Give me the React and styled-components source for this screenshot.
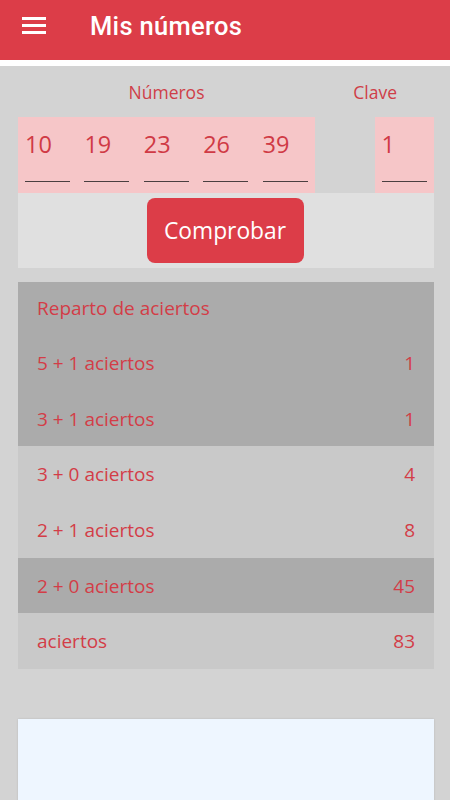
import React from "react";
import styled, { createGlobalStyle } from "styled-components";

const GlobalStyle = createGlobalStyle`
  html, body {
    margin: 0;
    padding: 0;
    background: #d3d3d3;
  }
  body {
    font-family: "Open Sans", "Noto Sans", sans-serif;
  }
`;

const numbers = ["10", "19", "23", "26", "39"];
const clave = "1";

const rows = [
  { label: "5 + 1 aciertos", value: "1", dark: true },
  { label: "3 + 1 aciertos", value: "1", dark: true },
  { label: "3 + 0 aciertos", value: "4", dark: false },
  { label: "2 + 1 aciertos", value: "8", dark: false },
  { label: "2 + 0 aciertos", value: "45", dark: true },
  { label: "aciertos", value: "83", dark: false },
];

export default function App() {
  return (
    <Page>
      <GlobalStyle />
      <TopBar>
        <MenuButton aria-label="menu">
          <span />
          <span />
          <span />
        </MenuButton>
        <Title>Mis números</Title>
      </TopBar>
      <Divider />
      <Content>
        <Labels>
          <NumbersLabel>Números</NumbersLabel>
          <ClaveLabel>Clave</ClaveLabel>
        </Labels>
        <InputRow>
          <InputGroup>
            {numbers.map((n) => (
              <Cell key={n}>
                <CellValue>{n}</CellValue>
                <Underline />
              </Cell>
            ))}
          </InputGroup>
          <InputGroup>
            <Cell>
              <CellValue>{clave}</CellValue>
              <Underline />
            </Cell>
          </InputGroup>
        </InputRow>
        <ButtonPanel>
          <CheckButton>Comprobar</CheckButton>
        </ButtonPanel>

        <Results>
          <ResultRow $dark>
            <span>Reparto de aciertos</span>
          </ResultRow>
          {rows.map((r) => (
            <ResultRow key={r.label} $dark={r.dark}>
              <span>{r.label}</span>
              <span>{r.value}</span>
            </ResultRow>
          ))}
        </Results>

        <AdBox />
      </Content>
    </Page>
  );
}

const Page = styled.div`
  width: 450px;
  height: 800px;
  overflow: hidden;
  background: #d3d3d3;
`;

const TopBar = styled.header`
  display: flex;
  align-items: center;
  height: 60px;
  background: #dc3d48;
  padding-left: 22px;
  box-sizing: border-box;
`;

const MenuButton = styled.div`
  display: flex;
  flex-direction: column;
  gap: 4.5px;
  width: 24px;
  margin-top: -9px;
  span {
    display: block;
    height: 2.5px;
    background: #fff;
  }
`;

const Title = styled.h1`
  margin: 0 0 0 44px;
  margin-top: -8px;
  font-family: Roboto, "Noto Sans", sans-serif;
  font-weight: 500;
  font-size: 25.5px;
  color: #fff;
  letter-spacing: 0.3px;
`;

const Divider = styled.div`
  height: 6px;
  background: #fff;
`;

const Content = styled.main`
  padding: 0 16px 0 18px;
`;

const Labels = styled.div`
  display: flex;
  height: 51px;
  align-items: center;
  font-size: 17.5px;
  color: #cf3e48;
`;

const NumbersLabel = styled.div`
  width: 297px;
  text-align: center;
`;

const ClaveLabel = styled.div`
  flex: 1;
  text-align: right;
  padding-right: 37px;
`;

const InputRow = styled.div`
  display: flex;
  justify-content: space-between;
  height: 76px;
`;

const InputGroup = styled.div`
  display: flex;
  background: #f6c6c8;
`;

const Cell = styled.div`
  width: 59.4px;
  display: flex;
  flex-direction: column;
  padding: 12px 0 0 7px;
  box-sizing: border-box;
`;

const CellValue = styled.div`
  font-size: 23.5px;
  line-height: 30px;
  color: #d03a45;
`;

const Underline = styled.div`
  margin-top: 22px;
  width: 45px;
  height: 1px;
  background: #4a3f40;
`;

const ButtonPanel = styled.div`
  display: flex;
  justify-content: center;
  align-items: center;
  height: 75px;
  background: #e0e0e0;
`;

const CheckButton = styled.button`
  width: 157px;
  height: 65px;
  border: none;
  border-radius: 8px;
  background: #dc3d48;
  color: #fff;
  font-family: "Open Sans", "Noto Sans", sans-serif;
  font-size: 22.8px;
  margin-right: 2px;
`;

const Results = styled.section`
  margin-top: 14px;
`;

const ResultRow = styled.div`
  display: flex;
  justify-content: space-between;
  align-items: center;
  height: 55.7px;
  padding: 0 19px;
  background: ${(p) => (p.$dark ? "#ababab" : "#c9c9c9")};
  color: #d33d47;
  font-size: 19px;
  &:first-child {
    height: 53px;
    padding-bottom: 2px;
    box-sizing: border-box;
  }
`;

const AdBox = styled.div`
  margin-top: 50px;
  height: 120px;
  background: #eef6ff;
  box-shadow: 0 0 2px rgba(0, 0, 0, 0.12);
`;
